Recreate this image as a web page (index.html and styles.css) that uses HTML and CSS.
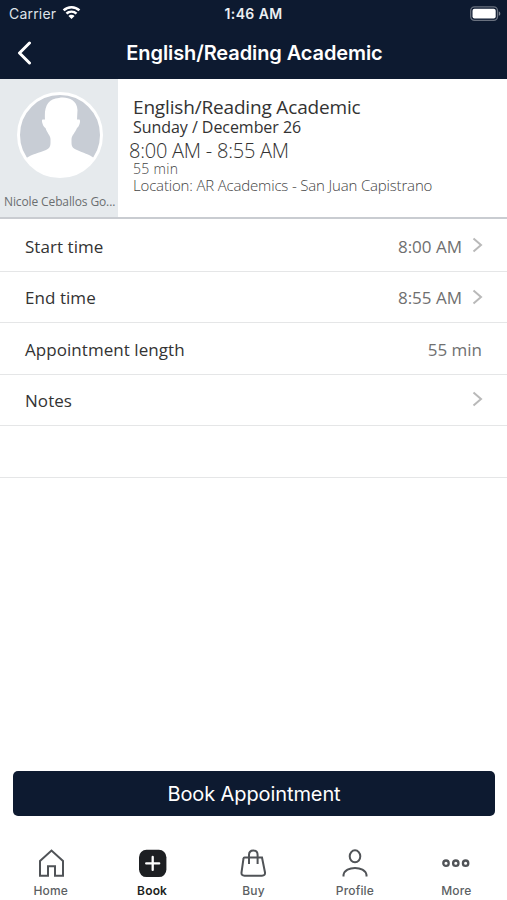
FILE: index.html
```html
<!DOCTYPE html>
<html lang="en">
<head>
<meta charset="utf-8">
<title>English/Reading Academic</title>
<link rel="stylesheet" href="styles.css">
</head>
<body>
<header class="top">
  <div class="status">
    <div class="carrier"><span>Carrier</span>
      <svg width="19" height="14" viewBox="0 0 20 15" fill="#fff"><path d="M10 0C6.3 0 3 1.4.6 3.7L2.5 5.7A10.8 10.8 0 0 1 17.5 5.7L19.4 3.7A13.6 13.6 0 0 0 10 0Z"/><path d="M10 4.7C7.5 4.7 5.3 5.6 3.7 7.1L5.6 9.1A6.4 6.4 0 0 1 14.4 9.1L16.3 7.1A9.2 9.2 0 0 0 10 4.7Z"/><path d="M10 9.3C8.7 9.3 7.5 9.8 6.7 10.6L10 14 13.3 10.6A4.7 4.7 0 0 0 10 9.3Z"/></svg>
    </div>
    <div class="clock">1:46 AM</div>
    <div class="battery"><svg width="31" height="16" viewBox="0 0 31 16"><rect x=".7" y=".9" width="26.8" height="13.4" rx="3.8" fill="none" stroke="#69717f" stroke-width="1.3"/><rect x="2.5" y="2.7" width="23.2" height="9.8" rx="2" fill="#fff"/><path d="M28.8 5.4C30.8 6 30.8 9.2 28.8 9.8Z" fill="#818895"/></svg></div>
  </div>
  <div class="nav">
    <svg class="back" width="16" height="24" viewBox="0 0 16 24"><path d="M13.500 2 3.500 12 13.500 22" fill="none" stroke="#fff" stroke-width="3" stroke-linecap="round" stroke-linejoin="round"/></svg>
    <h1>English/Reading Academic</h1>
  </div>
</header>
<section class="summary">
  <div class="staff">
    <svg width="86" height="86" viewBox="0 0 86 86"><circle cx="43" cy="43" r="41.500" fill="#c8cdd5" stroke="#fff" stroke-width="3"/><path d="M9.500 66C15 62 22 61 29 58C33 56 33.500 54 33.500 50V47C33 43 30 41 28.500 36C26 35 24 28 25.500 27.500H28C27 14 31 7 42 6C49 4.500 60 7 60.500 18L60 27.500H62.500C64 29 62 35 60 36C58 41 55 43 54.500 47V50C54.500 54 55 56 60 58C66 61 72 62 77 66A41 41 0 0 1 9.500 66Z" fill="#fff"/></svg>
    <div class="staff-name">Nicole Ceballos Go...</div>
  </div>
  <div class="details">
    <div class="service">English/Reading Academic</div>
    <div class="date">Sunday / December 26</div>
    <div class="hours">8:00 AM - 8:55 AM</div>
    <div class="length">55 min</div>
    <div class="place">Location: AR Academics - San Juan Capistrano</div>
  </div>
</section>
<main class="rows">
  <div class="row"><span class="label">Start time</span><span class="value">8:00 AM</span><svg class="chev" width="12" height="16" viewBox="0 0 12 16"><path d="M1.500 1.500 9 8 1.500 14.500"/></svg></div>
  <div class="row"><span class="label">End time</span><span class="value">8:55 AM</span><svg class="chev" width="12" height="16" viewBox="0 0 12 16"><path d="M1.500 1.500 9 8 1.500 14.500"/></svg></div>
  <div class="row"><span class="label">Appointment length</span><span class="value">55 min</span></div>
  <div class="row"><span class="label">Notes</span><svg class="chev" width="12" height="16" viewBox="0 0 12 16"><path d="M1.500 1.500 9 8 1.500 14.500"/></svg></div>
  <div class="row"></div>
</main>
<button class="book">Book Appointment</button>
<nav class="tabs">
  <div class="tab"><svg width="30" height="30" viewBox="0 0 30 30"><path d="M4 13 15.500 2.500 27 13V27.700H19V18.200H12V27.700H4Z"/></svg><span>Home</span></div>
  <div class="tab active"><svg width="30" height="30" viewBox="0 0 30 30"><rect x="2" y="1.700" width="27.400" height="27.400" rx="7.500" fill="#1d1f22" stroke="none"/><path d="M15.700 8.900V21.900M9.200 15.400H22.200" stroke="#fff" stroke-width="2.300" stroke-linecap="round"/></svg><span>Book</span></div>
  <div class="tab"><svg width="30" height="30" viewBox="0 0 30 30"><path d="M6.500 9.500H24L27 24.500Q27.300 27.700 24 27.700H6.500Q3.200 27.700 3.500 24.500L5.500 10.500Q5.600 9.500 6.500 9.500ZM11 16V7Q11 2.500 15.300 2.500T19.600 7V16"/></svg><span>Buy</span></div>
  <div class="tab"><svg width="30" height="30" viewBox="0 0 30 30"><ellipse cx="15" cy="8.300" rx="5.300" ry="6"/><path d="M3.500 28.500V27C5 17.500 25 17.500 26.500 27V28.500"/></svg><span>Profile</span></div>
  <div class="tab"><svg width="30" height="30" viewBox="0 0 30 30"><g stroke-width="2.300"><circle cx="5" cy="15.200" r="2.700"/><circle cx="14.800" cy="15.200" r="2.700"/><circle cx="24.600" cy="15.200" r="2.700"/></g></svg><span>More</span></div>
</nav>
</body>
</html>
```
FILE: styles.css
```css
* { box-sizing: border-box; }
body {
  margin: 0;
  height: 900px;
  display: flex;
  flex-direction: column;
  overflow: hidden;
  background: #fff;
  color: #333;
  font-family: "Open Sans", sans-serif;
  white-space: nowrap;
}
svg { display: block; flex: none; }

.top {
  height: 79px;
  background: #0d1a30;
  color: #fff;
  font-family: Inter, sans-serif;
}
.status {
  display: grid;
  grid-template-columns: 1fr auto 1fr;
  align-items: center;
  height: 27px;
  padding: 0 6px 0 9px;
}
.carrier { display: flex; align-items: center; gap: 6px; font-size: 14px; letter-spacing: 0.2px; color: #dfe3e9; }
.carrier svg { margin-top: -1px; }
.clock { margin-right: 3px; font-size: 14px; font-weight: 600; letter-spacing: 0.4px; color: #eceff3; }
.battery { justify-self: end; }
.nav {
  display: grid;
  grid-template-columns: 61px 1fr 59px;
  align-items: center;
  height: 51px;
}
.back { margin-left: 16px; }
.nav h1 { margin: 0; font-size: 20px; font-weight: 600; letter-spacing: -0.1px; text-align: center; }

.summary { display: flex; height: 140px; border-bottom: 2px solid #c9ccd1; }
.staff {
  width: 118px;
  padding: 13px 0 0 4px;
  background: #e6eaed;
}
.staff svg { margin-left: 12.5px; }
.staff-name { margin-top: 16px; line-height: 16px; font-size: 12px; letter-spacing: -0.12px; color: #6b6e70; }
.details { padding: 17px 0 0 15px; }
.service { font-size: 19px; letter-spacing: -0.17px; line-height: 22px; }
.date { font-size: 16px; letter-spacing: -0.05px; line-height: 18px; }
.hours { margin-left: -4px; font-size: 20px; font-weight: 300; letter-spacing: -0.23px; line-height: 29px; }
.length { margin-top: -2px; font-size: 14px; font-weight: 300; letter-spacing: 0.3px; line-height: 11px; color: #444; }
.place { margin-top: 3px; font-size: 15px; font-weight: 300; letter-spacing: -0.17px; line-height: 17px; color: #444; }

.rows { padding-top: 1.6px; }
.row {
  display: flex;
  align-items: center;
  height: 51.4px;
  padding: 1px 25px 0;
  border-bottom: 1px solid #e5e6e7;
  font-size: 17px;
}
.label { flex: 1; letter-spacing: 0.05px; }
.value { color: #707070; }
.chev { margin: -2px -2px 0 10px; fill: none; stroke: #b9b9b9; stroke-width: 2; }

.book {
  height: 45px;
  margin: auto 12px 0 13px;
  padding: 1px 0 0;
  border: 0;
  border-radius: 5px;
  background: #0d1a30;
  color: #fff;
  font: 400 20px Inter, sans-serif;
  letter-spacing: -0.1px;
}
.tabs {
  display: grid;
  grid-template-columns: repeat(5, 1fr);
  height: 84px;
  padding-top: 32px;
  font-family: Inter, sans-serif;
}
.tab {
  display: flex;
  flex-direction: column;
  align-items: center;
  gap: 5px;
  color: #5c5f63;
  font-size: 12px;
  font-weight: 500;
  letter-spacing: 0.15px;
  line-height: 15px;
}
.tab svg { fill: none; stroke: #505357; stroke-width: 2; }
.active { color: #1d1f22; font-weight: 600; }
```
